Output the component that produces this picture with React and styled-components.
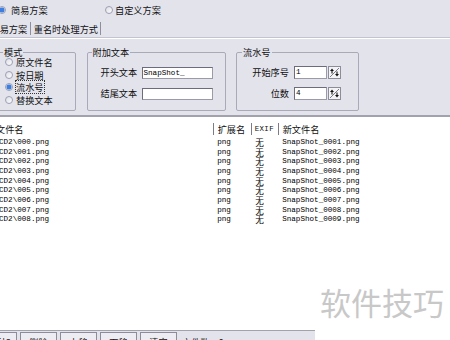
import React from 'react';
import styled, { createGlobalStyle } from 'styled-components';

const Global = createGlobalStyle`
  html, body { margin: 0; padding: 0; background: #ffffff; }
  body {
    width: 450px; height: 340px; overflow: hidden;
    font-family: "Noto Sans CJK SC", "Noto Sans", sans-serif;
    color: #111;
  }
`;

const PANEL = '#e3e3ec';
const CJK = '"Noto Sans CJK SC", "Noto Sans", sans-serif';
const MONO = '"Liberation Mono", "DejaVu Sans Mono", monospace';

const Viewport = styled.div`
  position: relative;
  width: 450px;
  height: 340px;
  overflow: hidden;
  background: #fff;
`;

const Window = styled.div`
  margin-left: -14px;
  width: 464px;
  height: 340px;
  display: flex;
  flex-direction: column;
`;

const TopPanel = styled.div`
  background: ${PANEL};
  height: 115px;
  display: flex;
  flex-direction: column;
  flex: none;
`;

const RadioRow = styled.div`
  height: 20px;
  display: flex;
  align-items: center;
  padding-left: 12px;
`;

const RadioItem = styled.label`
  display: flex;
  align-items: center;
  gap: ${p => p.$gap ?? 5}px;
  width: ${p => (p.$width ? `${p.$width}px` : 'auto')};
  height: ${p => p.$height ?? 12}px;
  font-size: 9.2px;
  line-height: 12px;
  white-space: nowrap;
`;

const RadioDot = styled.span`
  width: 8px;
  height: 8px;
  box-sizing: border-box;
  border-radius: 50%;
  border: 1px solid #9aa0b4;
  background: ${p =>
    p.$checked
      ? 'radial-gradient(circle, #3d7ee0 0 2.2px, #a8c4f0 2.6px, #eef2fa 3.4px)'
      : 'linear-gradient(135deg, #dcdce4, #ffffff)'};
  flex: none;
`;

const RadioText = styled.span`
  outline: ${p => (p.$focus ? '1px dotted #333' : 'none')};
  outline-offset: 0px;
`;

const TabStrip = styled.div`
  height: 17px;
  display: flex;
  align-items: center;
  border-bottom: 1px solid #c4c4d0;
  box-shadow: 0 1px 0 #ffffff;
`;

const Tab = styled.div`
  font-size: 9.2px;
  line-height: 12px;
  height: 13px;
  box-sizing: border-box;
  padding: 1px ${p => p.$pr ?? 3}px 0 ${p => p.$pl ?? 3}px;
  border-right: 1px solid #8e8e9c;
  white-space: nowrap;
`;

const GroupsRow = styled.div`
  display: flex;
  padding: 9px 0 0 11px;
  gap: ${p => p.$gap ?? 10}px;
`;

const Group = styled.fieldset`
  margin: 0;
  min-width: 0;
  box-sizing: border-box;
  width: ${p => p.$width}px;
  height: 64px;
  border: 1px solid #a9a9b8;
  border-radius: 2px;
  padding: 0 0 0 ${p => p.$pad ?? 0}px;
`;

const Legend = styled.legend`
  font-size: 9.2px;
  line-height: 10px;
  padding: 0 1px;
  margin-left: ${p => p.$ml ?? 4}px;
`;

const RadioList = styled.div`
  display: flex;
  flex-direction: column;
  padding-left: 7px;
  margin-top: -1px;
`;

const FormRows = styled.div`
  display: grid;
  grid-template-columns: ${p => p.$labelW}px auto;
  column-gap: ${p => p.$colGap}px;
  row-gap: 8px;
  align-items: center;
  margin-top: 9px;
`;

const FieldLabel = styled.span`
  font-size: 9.2px;
  line-height: 13px;
  text-align: right;
  white-space: nowrap;
`;

const InputWrap = styled.div`
  display: flex;
  align-items: center;
  gap: 1px;
`;

const TextBox = styled.div`
  box-sizing: border-box;
  width: ${p => p.$width}px;
  height: ${p => p.$height ?? 12}px;
  background: #fff;
  border: 1px solid #9a9aa8;
  border-top-color: #6c6c7a;
  border-left-color: #6c6c7a;
  font-family: ${MONO};
  font-size: 7.6px;
  line-height: ${p => (p.$height ?? 12) - 2}px;
  padding-left: 1px;
  color: #000;
  white-space: nowrap;
  overflow: hidden;
`;

const SpinBtn = styled.div`
  width: 13px;
  height: 13px;
  box-sizing: border-box;
  border: 1px solid #8d8d9a;
  background: #f4f4f6;
  display: flex;
`;

const ListArea = styled.div`
  flex: 1;
  background: #fff;
  border-top: 2px solid #a2a2ac;
  display: flex;
  flex-direction: column;
`;

const ListGrid = styled.div`
  display: grid;
  grid-template-columns: 226.7px 38px 27px 1fr;
`;

const HeaderRow = styled(ListGrid)`
  margin-top: 6px;
  height: 12px;
`;

const HeaderCell = styled.div`
  font-size: 9.2px;
  line-height: 12px;
  padding-left: ${p => p.$pl ?? 4}px;
  border-left: ${p => (p.$sep ? '1px solid #7c7c88' : 'none')};
  white-space: nowrap;
  overflow: hidden;
  font-family: ${p => (p.$mono ? MONO : CJK)};
  ${p => (p.$mono ? 'font-size: 7.4px; letter-spacing: 0.4px;' : '')}
`;

const Rows = styled.div`
  padding-top: 3px;
`;

const Row = styled(ListGrid)`
  height: 9.67px;
  align-items: center;
`;

const Cell = styled.div`
  font-family: ${p => (p.$cjk ? CJK : MONO)};
  font-size: ${p => (p.$cjk ? '8.6px' : '7.6px')};
  line-height: 9.67px;
  height: 9.67px;
  padding-left: ${p => p.$pl ?? 4.5}px;
  white-space: nowrap;
  color: #000;
`;

const BottomRow = styled.div`
  height: 10px;
  display: flex;
  flex: none;
  overflow: hidden;
`;

const ButtonBar = styled.div`
  width: 329px;
  background: ${PANEL};
  border-top: 1px solid #a2a2ac;
  box-sizing: border-box;
  display: flex;
  align-items: flex-start;
  gap: 3px;
  padding-top: 1px;
`;

const BarButton = styled.div`
  box-sizing: border-box;
  width: ${p => p.$width}px;
  height: 14px;
  border: 1px solid #8c8c9a;
  border-bottom: none;
  background: #ececf2;
  font-size: 9.2px;
  line-height: 12px;
  padding-top: 3px;
  text-align: center;
  white-space: nowrap;
  overflow: hidden;
`;

const StatusText = styled.div`
  font-size: 9.2px;
  line-height: 12px;
  padding: 4px 0 0 2px;
  white-space: nowrap;
`;

const Watermark = styled.div`
  position: absolute;
  left: 320px;
  top: 286px;
  font-family: ${CJK};
  font-size: 31px;
  line-height: 31px;
  color: #c8c8c8;
  white-space: nowrap;
  pointer-events: none;
`;

function SpinIcon() {
  return (
    <svg width="11" height="11" viewBox="0 0 11 11">
      <line x1="1" y1="10" x2="10" y2="1" stroke="#606070" strokeWidth="0.8" />
      <path d="M3 1.5 L5 4 L1 4 Z" fill="#111" />
      <line x1="3" y1="3.5" x2="3" y2="6.5" stroke="#111" strokeWidth="1.1" />
      <path d="M8 9.5 L10 7 L6 7 Z" fill="#111" />
      <line x1="8" y1="4.5" x2="8" y2="7.5" stroke="#111" strokeWidth="1.1" />
    </svg>
  );
}

const files = ['000', '001', '002', '003', '004', '005', '006', '007', '008'];

export default function App() {
  return (
    <Viewport>
      <Global />
      <Window>
        <TopPanel>
          <RadioRow>
            <RadioItem $width={107}>
              <RadioDot $checked />
              <span>简易方案</span>
            </RadioItem>
            <RadioItem $gap={2}>
              <RadioDot />
              <span>自定义方案</span>
            </RadioItem>
          </RadioRow>
          <TabStrip>
            <Tab $pl={4.5} $pr={2.5}>简易方案</Tab>
            <Tab $pl={3} $pr={2}>重名时处理方式</Tab>
          </TabStrip>
          <GroupsRow $gap={10.5}>
            <Group $width={79}>
              <Legend $ml={5}>模式</Legend>
              <RadioList>
                <RadioItem $height={12.6} $gap={3}>
                  <RadioDot />
                  <span>原文件名</span>
                </RadioItem>
                <RadioItem $height={12.6} $gap={3}>
                  <RadioDot />
                  <span>按日期</span>
                </RadioItem>
                <RadioItem $height={12.6} $gap={3}>
                  <RadioDot $checked />
                  <RadioText $focus>流水号</RadioText>
                </RadioItem>
                <RadioItem $height={12.6} $gap={3}>
                  <RadioDot />
                  <span>替换文本</span>
                </RadioItem>
              </RadioList>
            </Group>
            <Group $width={139} $pad={13}>
              <Legend $ml={-9}>附加文本</Legend>
              <FormRows $labelW={34} $colGap={7}>
                <FieldLabel>开头文本</FieldLabel>
                <InputWrap>
                  <TextBox $width={71}>SnapShot_</TextBox>
                </InputWrap>
                <FieldLabel>结尾文本</FieldLabel>
                <InputWrap>
                  <TextBox $width={71}></TextBox>
                </InputWrap>
              </FormRows>
            </Group>
            <Group $width={123} $pad={15}>
              <Legend $ml={-10}>流水号</Legend>
              <FormRows $labelW={37} $colGap={5}>
                <FieldLabel>开始序号</FieldLabel>
                <InputWrap>
                  <TextBox $width={33} $height={13}>1</TextBox>
                  <SpinBtn><SpinIcon /></SpinBtn>
                </InputWrap>
                <FieldLabel>位数</FieldLabel>
                <InputWrap>
                  <TextBox $width={33} $height={13}>4</TextBox>
                  <SpinBtn><SpinIcon /></SpinBtn>
                </InputWrap>
              </FormRows>
            </Group>
          </GroupsRow>
        </TopPanel>
        <ListArea>
          <HeaderRow>
            <HeaderCell $pl={10}>文件名</HeaderCell>
            <HeaderCell $sep>扩展名</HeaderCell>
            <HeaderCell $sep $mono $pl={3}>EXIF</HeaderCell>
            <HeaderCell $sep>新文件名</HeaderCell>
          </HeaderRow>
          <Rows>
            {files.map((f, i) => (
              <Row key={f}>
                <Cell $pl={13}>{`CD2\\${f}.png`}</Cell>
                <Cell>png</Cell>
                <Cell $cjk $pl={4.5}>无</Cell>
                <Cell>{`SnapShot_${String(i + 1).padStart(4, '0')}.png`}</Cell>
              </Row>
            ))}
          </Rows>
        </ListArea>
        <BottomRow>
          <ButtonBar>
            <BarButton $width={31}>添加</BarButton>
            <BarButton $width={37}>删除</BarButton>
            <BarButton $width={37}>上移</BarButton>
            <BarButton $width={37}>下移</BarButton>
            <BarButton $width={37}>清空</BarButton>
            <StatusText>文件数：9</StatusText>
          </ButtonBar>
        </BottomRow>
      </Window>
      <Watermark>软件技巧</Watermark>
    </Viewport>
  );
}
